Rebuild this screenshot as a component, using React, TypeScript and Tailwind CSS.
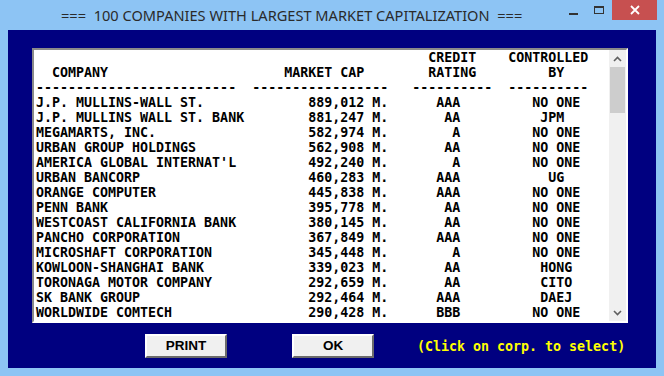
import React from 'react';

type Corp = { name: string; cap: string; rating: string; owner: string };

const corps: Corp[] = [
  { name: 'J.P. MULLINS-WALL ST.', cap: '889,012', rating: 'AAA', owner: 'NO ONE' },
  { name: 'J.P. MULLINS WALL ST. BANK', cap: '881,247', rating: 'AA', owner: 'JPM' },
  { name: 'MEGAMARTS, INC.', cap: '582,974', rating: 'A', owner: 'NO ONE' },
  { name: 'URBAN GROUP HOLDINGS', cap: '562,908', rating: 'AA', owner: 'NO ONE' },
  { name: "AMERICA GLOBAL INTERNAT'L", cap: '492,240', rating: 'A', owner: 'NO ONE' },
  { name: 'URBAN BANCORP', cap: '460,283', rating: 'AAA', owner: 'UG' },
  { name: 'ORANGE COMPUTER', cap: '445,838', rating: 'AAA', owner: 'NO ONE' },
  { name: 'PENN BANK', cap: '395,778', rating: 'AA', owner: 'NO ONE' },
  { name: 'WESTCOAST CALIFORNIA BANK', cap: '380,145', rating: 'AA', owner: 'NO ONE' },
  { name: 'PANCHO CORPORATION', cap: '367,849', rating: 'AAA', owner: 'NO ONE' },
  { name: 'MICROSHAFT CORPORATION', cap: '345,448', rating: 'A', owner: 'NO ONE' },
  { name: 'KOWLOON-SHANGHAI BANK', cap: '339,023', rating: 'AA', owner: 'HONG' },
  { name: 'TORONAGA MOTOR COMPANY', cap: '292,659', rating: 'AA', owner: 'CITO' },
  { name: 'SK BANK GROUP', cap: '292,464', rating: 'AAA', owner: 'DAEJ' },
  { name: 'WORLDWIDE COMTECH', cap: '290,428', rating: 'BBB', owner: 'NO ONE' },
];

// place text at fixed character columns, like the old text-mode screen
const at = (line: string, col: number, text: string) => line.padEnd(col, ' ') + text;

const header1 = at(at('', 49, 'CREDIT'), 59, 'CONTROLLED');
const header2 = at(at(at('  COMPANY', 31, 'MARKET CAP'), 49, 'RATING'), 64, 'BY');
const rule = at(at(at('-'.repeat(25), 27, '-'.repeat(17)), 47, '-'.repeat(10)), 59, '-'.repeat(10));

const rowLine = (c: Corp) => {
  let s = at(c.name, 34, c.cap + ' M.');
  s = at(s, 53 - c.rating.length, c.rating);
  s = at(s, 65 - Math.ceil(c.owner.length / 2), c.owner);
  return s;
};

const mono = "font-['DejaVu_Sans_Mono','Liberation_Mono',monospace] font-bold text-[13.3px] leading-[15px]";

function Chevron({ up }: { up?: boolean }) {
  return (
    <svg width="9" height="6" viewBox="0 0 9 6">
      <polyline
        points={up ? '1,5 4.5,1.5 8,5' : '1,1 4.5,4.5 8,1'}
        fill="none"
        stroke="#606060"
        strokeWidth="1.6"
      />
    </svg>
  );
}

function Button({ label }: { label: string }) {
  return (
    <button className="w-[82px] h-[24px] bg-[#f0f0f0] border-2 border-t-white border-l-white border-b-[#6b6b6b] border-r-[#6b6b6b] font-['Liberation_Sans',Arial,sans-serif] font-bold text-[13.5px] text-black flex items-center justify-center">
      {label}
    </button>
  );
}

export default function App() {
  return (
    <div className="w-[664px] h-[376px] bg-[#8dc4f4] flex flex-col overflow-hidden">
      {/* title bar */}
      <div className="h-[30px] flex items-start shrink-0">
        <div className="pl-[61px] pt-[5px] font-['Noto_Sans',Arial,sans-serif] text-[14.6px] leading-[20px] text-[#2a2a2a] whitespace-pre">
          {'===  100 COMPANIES WITH LARGEST MARKET CAPITALIZATION  ==='}
        </div>
        <div className="ml-auto flex items-start">
          <div className="w-[26px] h-[20px] flex items-center justify-center pt-[8px]">
            <div className="w-[9px] h-[2px] bg-[#333]" />
          </div>
          <div className="w-[26px] h-[20px] flex items-center justify-center">
            <div className="w-[10px] h-[8px] border border-[#333] border-t-2" />
          </div>
          <div className="w-[45px] h-[20px] bg-[#c75050] flex items-center justify-center mr-[7px]">
            <svg width="10" height="10" viewBox="0 0 10 10">
              <path d="M1 1L9 9M9 1L1 9" stroke="white" strokeWidth="1.8" />
            </svg>
          </div>
        </div>
      </div>

      {/* dialog body */}
      <div className="flex-1 mx-[8px] mb-[8px] bg-[#000080] pt-[18px] pl-[24px] flex flex-col">
        <div className="w-[596px] h-[275px] bg-white border-2 border-t-[#8a8a8a] border-l-[#8a8a8a] border-r-white border-b-white flex">
          <pre className={`flex-1 pl-[2px] text-black ${mono}`}>
            {[header1, header2, rule, ...corps.map(rowLine)].join('\n')}
          </pre>
          <div className="w-[17px] bg-[#f0f0f0] flex flex-col">
            <div className="h-[17px] flex items-center justify-center">
              <Chevron up />
            </div>
            <div className="h-[46px] mx-[1px] bg-[#cdcdcd]" />
            <div className="flex-1" />
            <div className="h-[17px] flex items-center justify-center">
              <Chevron />
            </div>
          </div>
        </div>

        <div className="flex items-center mt-[11px] pl-[113px]">
          <Button label="PRINT" />
          <div className="ml-[65px]">
            <Button label="OK" />
          </div>
          <div className={`ml-[43px] text-[#ffff00] whitespace-pre ${mono}`}>(Click on corp. to select)</div>
        </div>
      </div>
    </div>
  );
}
